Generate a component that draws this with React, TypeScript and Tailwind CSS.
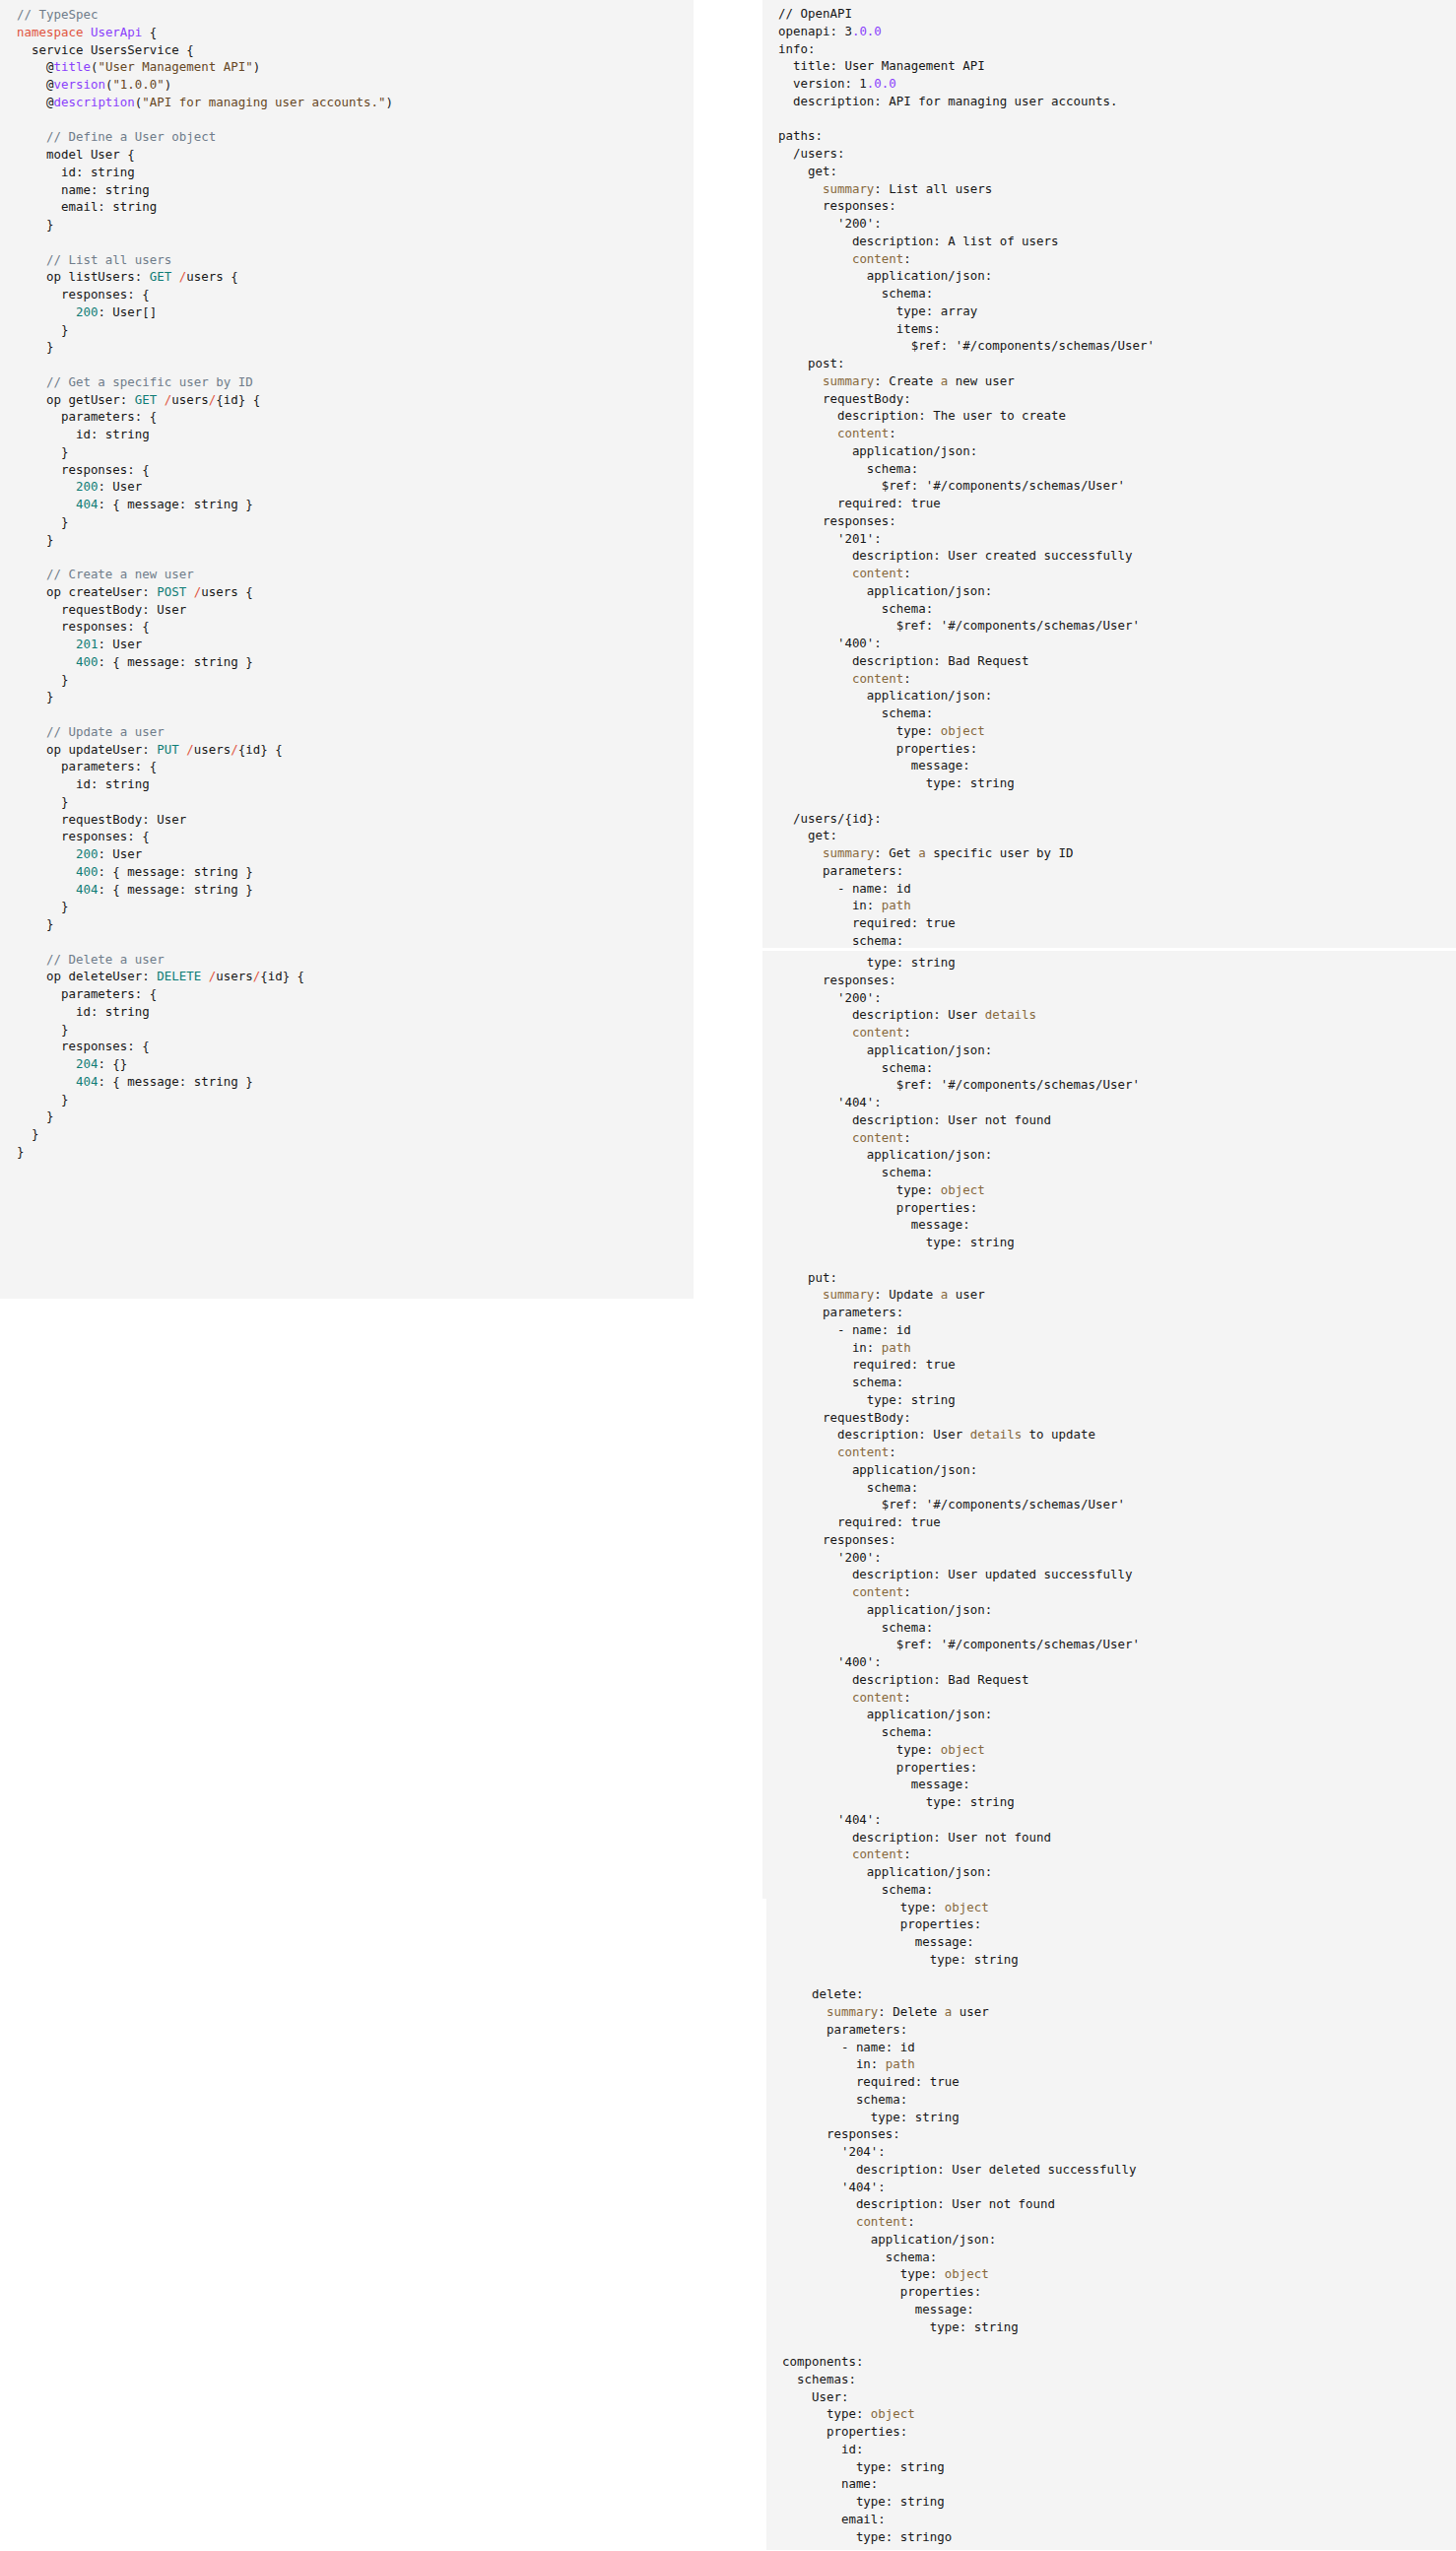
import type { ReactNode } from 'react';

// token colours, keyed by the letter used in the line markup
const TONE: Record<string, string> = {
    c: 'text-[#6f7c8a]',
    r: 'text-[#e0533d]',
    p: 'text-[#8a3ffc]',
    t: 'text-[#0e7c75]',
    b: 'text-[#86683c]',
    s: 'text-[#664724]',
};

const typeSpec = `⟨c:// TypeSpec⟩
⟨r:namespace⟩ ⟨p:UserApi⟩ {
  service UsersService {
    @⟨p:title⟩(⟨s:"User Management API"⟩)
    @⟨p:version⟩(⟨s:"1.0.0"⟩)
    @⟨p:description⟩(⟨s:"API for managing user accounts."⟩)

    ⟨c:// Define a User object⟩
    model User {
      id: string
      name: string
      email: string
    }

    ⟨c:// List all users⟩
    op listUsers: ⟨t:GET⟩ ⟨r:/⟩users {
      responses: {
        ⟨t:200⟩: User[]
      }
    }

    ⟨c:// Get a specific user by ID⟩
    op getUser: ⟨t:GET⟩ ⟨r:/⟩users⟨r:/⟩{id} {
      parameters: {
        id: string
      }
      responses: {
        ⟨t:200⟩: User
        ⟨t:404⟩: { message: string }
      }
    }

    ⟨c:// Create a new user⟩
    op createUser: ⟨t:POST⟩ ⟨r:/⟩users {
      requestBody: User
      responses: {
        ⟨t:201⟩: User
        ⟨t:400⟩: { message: string }
      }
    }

    ⟨c:// Update a user⟩
    op updateUser: ⟨t:PUT⟩ ⟨r:/⟩users⟨r:/⟩{id} {
      parameters: {
        id: string
      }
      requestBody: User
      responses: {
        ⟨t:200⟩: User
        ⟨t:400⟩: { message: string }
        ⟨t:404⟩: { message: string }
      }
    }

    ⟨c:// Delete a user⟩
    op deleteUser: ⟨t:DELETE⟩ ⟨r:/⟩users⟨r:/⟩{id} {
      parameters: {
        id: string
      }
      responses: {
        ⟨t:204⟩: {}
        ⟨t:404⟩: { message: string }
      }
    }
  }
}`;

const openApiTop = `// OpenAPI
openapi: 3⟨p:.0.0⟩
info:
  title: User Management API
  version: 1⟨p:.0.0⟩
  description: API for managing user accounts.

paths:
  /users:
    get:
      ⟨b:summary⟩: List all users
      responses:
        '200':
          description: A list of users
          ⟨b:content⟩:
            application/json:
              schema:
                type: array
                items:
                  $ref: '#/components/schemas/User'
    post:
      ⟨b:summary⟩: Create ⟨b:a⟩ new user
      requestBody:
        description: The user to create
        ⟨b:content⟩:
          application/json:
            schema:
              $ref: '#/components/schemas/User'
        required: true
      responses:
        '201':
          description: User created successfully
          ⟨b:content⟩:
            application/json:
              schema:
                $ref: '#/components/schemas/User'
        '400':
          description: Bad Request
          ⟨b:content⟩:
            application/json:
              schema:
                type: ⟨b:object⟩
                properties:
                  message:
                    type: string

  /users/{id}:
    get:
      ⟨b:summary⟩: Get ⟨b:a⟩ specific user by ID
      parameters:
        - name: id
          in: ⟨b:path⟩
          required: true
          schema:`;

const openApiMid = `            type: string
      responses:
        '200':
          description: User ⟨b:details⟩
          ⟨b:content⟩:
            application/json:
              schema:
                $ref: '#/components/schemas/User'
        '404':
          description: User not found
          ⟨b:content⟩:
            application/json:
              schema:
                type: ⟨b:object⟩
                properties:
                  message:
                    type: string

    put:
      ⟨b:summary⟩: Update ⟨b:a⟩ user
      parameters:
        - name: id
          in: ⟨b:path⟩
          required: true
          schema:
            type: string
      requestBody:
        description: User ⟨b:details⟩ to update
        ⟨b:content⟩:
          application/json:
            schema:
              $ref: '#/components/schemas/User'
        required: true
      responses:
        '200':
          description: User updated successfully
          ⟨b:content⟩:
            application/json:
              schema:
                $ref: '#/components/schemas/User'
        '400':
          description: Bad Request
          ⟨b:content⟩:
            application/json:
              schema:
                type: ⟨b:object⟩
                properties:
                  message:
                    type: string
        '404':
          description: User not found
          ⟨b:content⟩:
            application/json:
              schema:`;

const openApiEnd = `                type: ⟨b:object⟩
                properties:
                  message:
                    type: string

    delete:
      ⟨b:summary⟩: Delete ⟨b:a⟩ user
      parameters:
        - name: id
          in: ⟨b:path⟩
          required: true
          schema:
            type: string
      responses:
        '204':
          description: User deleted successfully
        '404':
          description: User not found
          ⟨b:content⟩:
            application/json:
              schema:
                type: ⟨b:object⟩
                properties:
                  message:
                    type: string

components:
  schemas:
    User:
      type: ⟨b:object⟩
      properties:
        id:
          type: string
        name:
          type: string
        email:
          type: stringo`;

function renderLine(src: string) {
    const out: ReactNode[] = [];
    const re = /⟨(\w):([^⟩]*)⟩/g;
    let last = 0;
    let m: RegExpExecArray | null;
    let k = 0;
    while ((m = re.exec(src))) {
        if (m.index > last) out.push(src.slice(last, m.index));
        out.push(
            <span key={k++} className={TONE[m[1]]}>
                {m[2]}
            </span>
        );
        last = re.lastIndex;
    }
    if (last < src.length) out.push(src.slice(last));
    return out;
}

function Code({ src, className }: { src: string; className: string }) {
    return (
        <div className={className}>
            {src.split('\n').map((line, i) => (
                <div key={i} className="h-[17.75px] whitespace-pre">
                    {renderLine(line)}
                </div>
            ))}
        </div>
    );
}

export default function App() {
    return (
        <div className="flex items-start gap-[70px] w-[1478px] min-h-[2589px] bg-white text-[#161616] font-['DejaVu_Sans_Mono',monospace] text-[12.45px] leading-[17.75px]">
            {/* TypeSpec */}
            <Code src={typeSpec} className="w-[704px] h-[1318px] shrink-0 bg-[#f4f4f4] pl-[17px] pt-[6px]" />

            {/* OpenAPI */}
            <div className="flex flex-col w-[704px] shrink-0">
                <Code src={openApiTop} className="h-[962px] overflow-hidden bg-[#f4f4f4] pl-4 pt-[5px]" />
                <Code src={openApiMid} className="mt-[3px] bg-[#f4f4f4] pl-4 pt-[3px]" />
                <Code src={openApiEnd} className="ml-[4px] bg-[#f4f4f4] pl-4 pb-[5px]" />
            </div>
        </div>
    );
}
